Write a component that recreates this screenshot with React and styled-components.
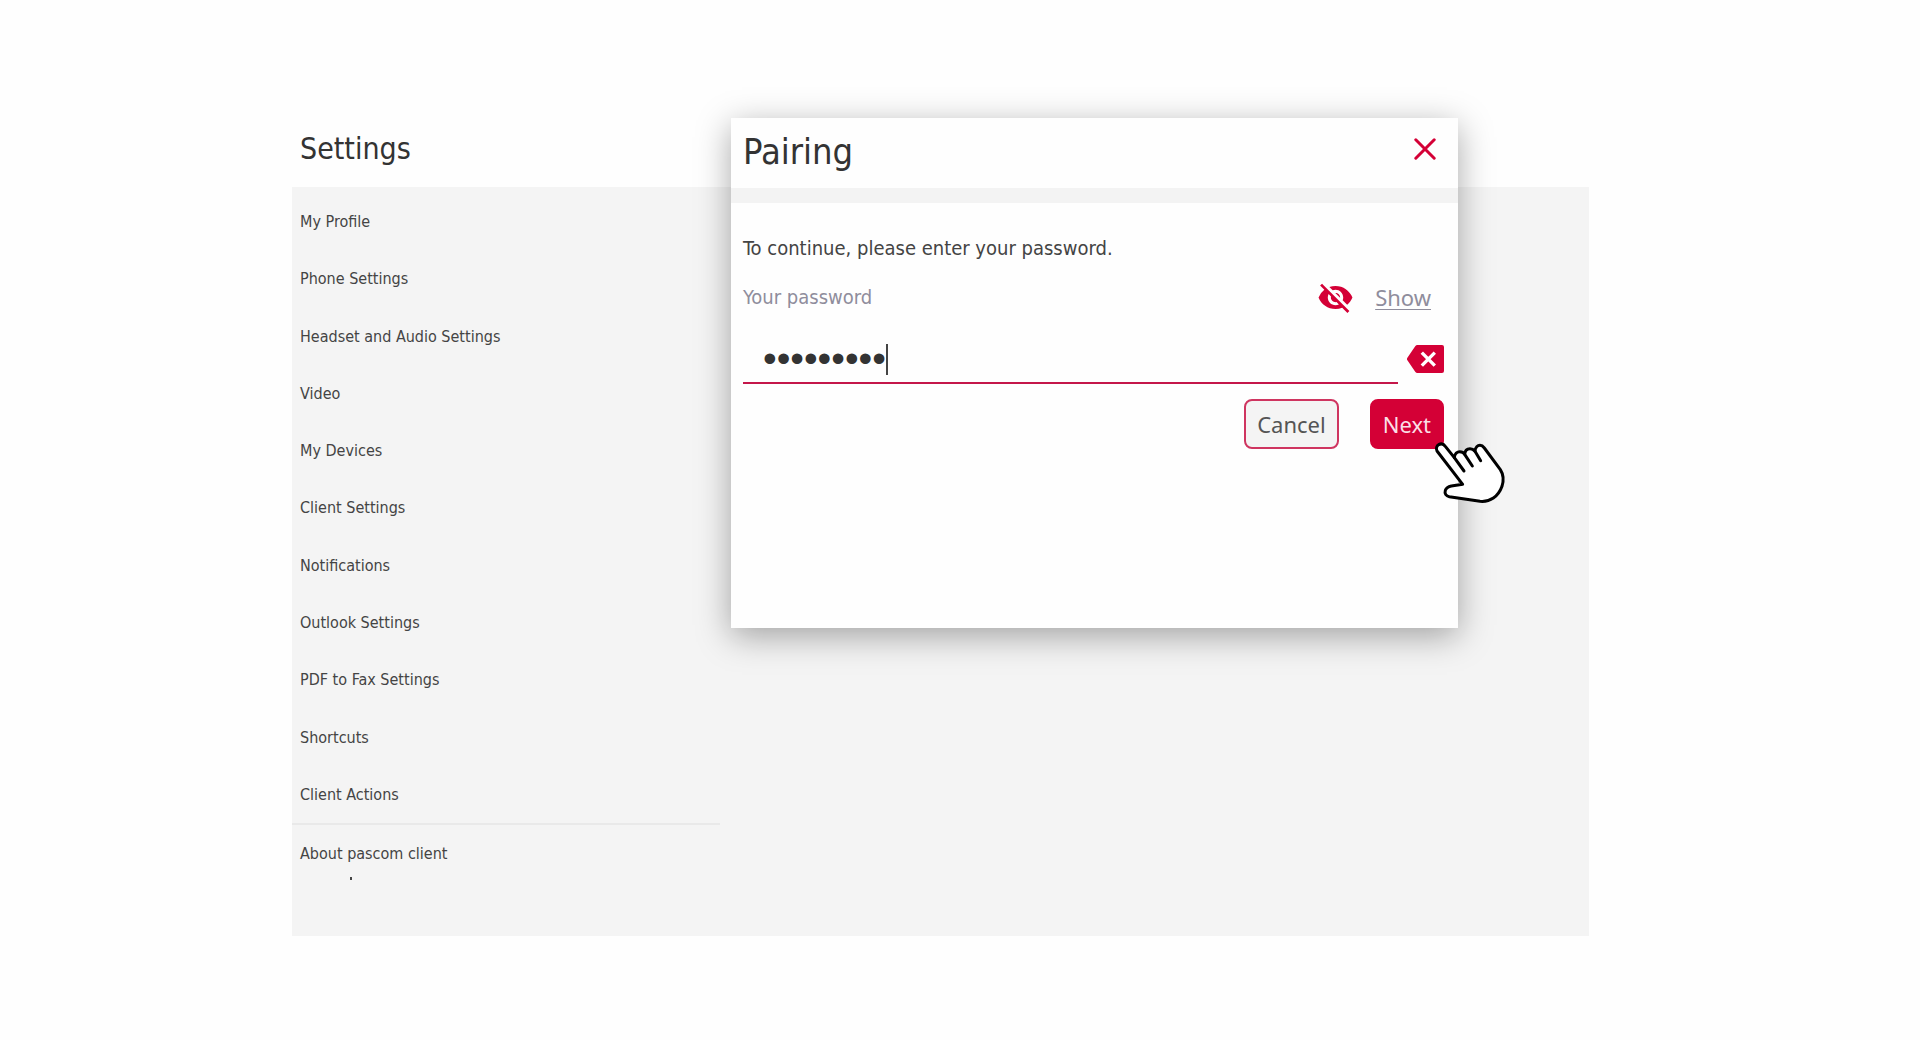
import React, { useState } from "react";
import styled, { createGlobalStyle } from "styled-components";
import { MdVisibilityOff } from "react-icons/md";

const RED = "#d40036";
const UI_FONT = '"DejaVu Sans Condensed", "DejaVu Sans", sans-serif';
const CONTROL_FONT = '"Noto Sans", "Open Sans", sans-serif';

const GlobalStyle = createGlobalStyle`
  *, *::before, *::after { box-sizing: border-box; }
  body {
    margin: 0;
    background: #fefefe;
    color: #444;
    font-family: ${UI_FONT};
  }
  h1, h2, p, ul { margin: 0; padding: 0; font-weight: 400; }
  button, input { font: inherit; }
`;

const Page = styled.div`
  min-height: 100vh;
  padding: 109px 331px 104px 292px;
`;

const Window = styled.main`
  position: relative;
`;

const WindowHeader = styled.header`
  display: flex;
  align-items: center;
  height: 78px;
  padding: 2px 8px 0;
`;

const WindowTitle = styled.h1`
  font-size: 30px;
  line-height: 40px;
  color: #333;
`;

const Panel = styled.div`
  display: flex;
  min-height: 749px;
  background: #f4f4f4;
`;

const Sidebar = styled.nav`
  display: flex;
  flex-direction: column;
  width: 428px;
  padding-top: 6px;
`;

const MenuList = styled.ul`
  flex: 1;
  display: grid;
  grid-auto-rows: 1fr;
  list-style: none;
`;

const MenuItem = styled.li`
  display: flex;
  flex-direction: column;
  justify-content: center;
`;

const MenuLink = styled.a`
  padding: 1px 8px 0;
  font-size: 16px;
  line-height: 24px;
  color: #444;
  text-decoration: none;
`;

const SidebarFooter = styled.div`
  display: flex;
  flex-direction: column;
  height: 113px;
  padding-top: 16px;
  border-top: 2px solid #e9e9e9;
`;

const Speck = styled.span`
  width: 2px;
  height: 3px;
  margin: 11px 0 0 58px;
  background: #444;
`;

const Dialog = styled.section`
  position: absolute;
  top: 9px;
  left: 439px;
  right: 131px;
  min-height: 510px;
  background: #fefefe;
  box-shadow: 0 8px 32px rgba(0, 0, 0, 0.34);
`;

const DialogHeader = styled.header`
  display: flex;
  align-items: flex-start;
  justify-content: space-between;
  height: 85px;
  padding: 20px 22px 0 12px;
  border-bottom: 15px solid #f3f3f3;
`;

const DialogTitle = styled.h2`
  font-size: 36px;
  line-height: 28px;
  color: #333;
`;

const IconButton = styled.button`
  display: flex;
  align-items: center;
  justify-content: center;
  padding: 0;
  border: 0;
  background: none;
  color: ${RED};
  cursor: pointer;
`;

const DialogForm = styled.form`
  display: flex;
  flex-direction: column;
  padding: 31px 14px 0 12px;
`;

const Message = styled.p`
  font-size: 20px;
  line-height: 28px;
  color: #444;
`;

const LabelRow = styled.div`
  display: flex;
  align-items: center;
  height: 40px;
  margin-top: 15px;
  padding-right: 13px;
`;

const FieldLabel = styled.label`
  flex: 1;
  font-size: 20px;
  line-height: 28px;
  color: #8f8d9c;
`;

const ShowLink = styled.a`
  margin-left: 21px;
  font-family: ${CONTROL_FONT};
  font-size: 22px;
  line-height: 28px;
  color: #8f8d9c;
  text-decoration: underline;
  text-decoration-thickness: 1px;
  text-underline-offset: 3px;
`;

const FieldRow = styled.div`
  display: flex;
  align-items: center;
  gap: 9px;
  margin-top: 17px;
`;

const Field = styled.div`
  flex: 1;
  display: flex;
  align-items: center;
  height: 50px;
  padding: 2px 0 0 20px;
  border-bottom: 2px solid #c4174a;
`;

const PasswordInput = styled.input`
  field-sizing: content;
  height: 40px;
  padding: 0;
  border: 0;
  outline: 0;
  background: none;
  color: #333;
  font-family: "Liberation Sans", sans-serif;
  font-size: 39px;
  line-height: 40px;
`;

const Caret = styled.span`
  width: 2px;
  height: 31px;
  background: #444;
`;

const Actions = styled.div`
  display: flex;
  justify-content: flex-end;
  gap: 31px;
  margin-top: 15px;
`;

const Button = styled.button`
  height: 50px;
  padding: 0 11px;
  border: 2px solid ${(p) => (p.$primary ? RED : "#cf3560")};
  border-radius: 8px;
  background: ${(p) => (p.$primary ? RED : "#f4f4f4")};
  color: ${(p) => (p.$primary ? "#fbdfe6" : "#555")};
  font-family: ${CONTROL_FONT};
  font-size: 22px;
  line-height: 28px;
  cursor: pointer;
`;

const Pointer = styled.svg`
  position: absolute;
  top: 322px;
  right: -49px;
  pointer-events: none;
`;

const MENU = [
  "My Profile",
  "Phone Settings",
  "Headset and Audio Settings",
  "Video",
  "My Devices",
  "Client Settings",
  "Notifications",
  "Outlook Settings",
  "PDF to Fax Settings",
  "Shortcuts",
  "Client Actions",
];

function CloseIcon() {
  return (
    <svg width="22" height="22" viewBox="0 0 22 22" aria-hidden="true">
      <path d="M1.8 1.8 20.2 20.2M20.2 1.8 1.8 20.2" stroke="currentColor" strokeWidth="3" strokeLinecap="round" />
    </svg>
  );
}

function ClearIcon() {
  return (
    <svg width="37" height="28" viewBox="0 0 37 28" aria-hidden="true">
      <path d="M10.5 0H35a2 2 0 0 1 2 2v24a2 2 0 0 1-2 2H10.5a3 3 0 0 1-2.3-1.2L.4 15.2a2 2 0 0 1 0-2.4L8.2 1.2A3 3 0 0 1 10.5 0Z" fill="currentColor" />
      <path d="M14.8 7.600 27.800 20.600M27.800 7.600 14.800 20.600" stroke="#fff" strokeWidth="3.400" />
    </svg>
  );
}

function PointerHand() {
  return (
    <Pointer width="73" height="65" viewBox="100 57 219 195" aria-hidden="true">
      <path
        d="M186 190 109 90C105 83 108 74 114 71C121 67 129 69 134 76L161 110C162 98 170 92 177 92C184 92 189 95 192 100C193 88 200 83 208 83C215 83 219 86 223 91C224 79 231 73 238 73C244 73 248 77 251 81L299 146C308 160 309 180 304 196C293 227 268 244 238 241L146 227C136 225 131 218 134 208C137 200 144 197 152 195Z"
        fill="#fff"
        stroke="#000"
        strokeWidth="9"
        strokeLinejoin="round"
      />
      <path d="M161 110 190 150M192 100 215 135M223 91 240 119" fill="none" stroke="#000" strokeWidth="9" strokeLinecap="round" />
    </Pointer>
  );
}

export default function App() {
  const [password, setPassword] = useState("pairing12");

  return (
    <>
      <GlobalStyle />
      <Page>
        <Window>
          <WindowHeader>
            <WindowTitle>Settings</WindowTitle>
          </WindowHeader>
          <Panel>
            <Sidebar aria-label="Settings">
              <MenuList>
                {MENU.map((name) => (
                  <MenuItem key={name}>
                    <MenuLink href="#">{name}</MenuLink>
                  </MenuItem>
                ))}
              </MenuList>
              <SidebarFooter>
                <MenuLink href="#">About pascom client</MenuLink>
                <Speck />
              </SidebarFooter>
            </Sidebar>
          </Panel>

          <Dialog role="dialog" aria-labelledby="pairing-title">
            <DialogHeader>
              <DialogTitle id="pairing-title">Pairing</DialogTitle>
              <IconButton type="button" aria-label="Close">
                <CloseIcon />
              </IconButton>
            </DialogHeader>
            <DialogForm onSubmit={(e) => e.preventDefault()}>
              <Message>To continue, please enter your password.</Message>
              <LabelRow>
                <FieldLabel htmlFor="password">Your password</FieldLabel>
                <MdVisibilityOff size={37} color={RED} aria-hidden="true" />
                <ShowLink href="#">Show</ShowLink>
              </LabelRow>
              <FieldRow>
                <Field>
                  <PasswordInput
                    id="password"
                    type="password"
                    autoComplete="off"
                    value={password}
                    onChange={(e) => setPassword(e.target.value)}
                  />
                  <Caret />
                </Field>
                <IconButton type="button" aria-label="Clear" onClick={() => setPassword("")}>
                  <ClearIcon />
                </IconButton>
              </FieldRow>
              <Actions>
                <Button type="button">Cancel</Button>
                <Button type="submit" $primary>Next</Button>
              </Actions>
            </DialogForm>
            <PointerHand />
          </Dialog>
        </Window>
      </Page>
    </>
  );
}
